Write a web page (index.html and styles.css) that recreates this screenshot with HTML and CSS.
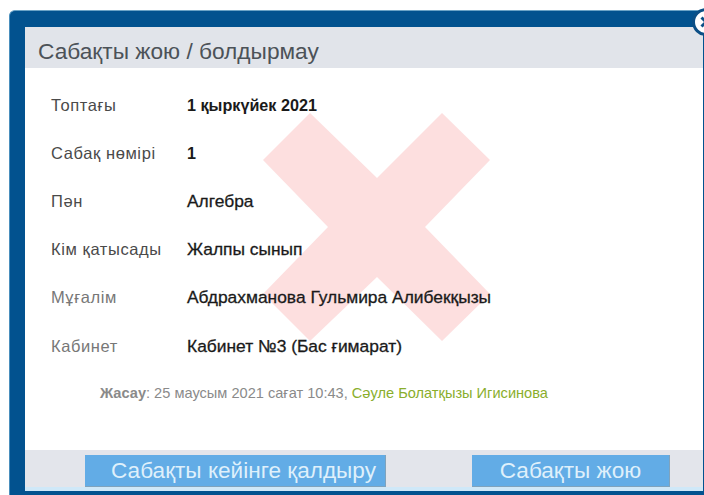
FILE: index.html
```html
<!DOCTYPE html>
<html lang="kk">
<head>
<meta charset="utf-8">
<title>Сабақты жою / болдырмау</title>
<link rel="stylesheet" href="styles.css">
</head>
<body>
<section class="dialog">
  <button class="close" type="button" aria-label="Жабу">
    <svg class="close-icon" viewBox="0 0 30 30" width="30" height="30">
      <circle cx="15" cy="15" r="12.5" fill="#fff" stroke="#0c4f86" stroke-width="3"/>
      <path d="M10.5 10.5l9 9M19.5 10.5l-9 9" stroke="#0c4f86" stroke-width="3"/>
    </svg>
  </button>
  <div class="panel">
    <header class="head">Сабақты жою / болдырмау</header>
    <div class="body">
      <svg class="cross" viewBox="0 0 227 228" width="227" height="228" aria-hidden="true">
        <path d="M47 0L114 65L179 0L227 47L162 114L227 181L179 228L114 164L47 228L0 181L65 114L0 47Z" fill="#fddfdf"/>
      </svg>
      <dl class="info">
        <dt class="label">Топтағы</dt><dd class="value strong">1 қыркүйек 2021</dd>
        <dt class="label">Сабақ нөмірі</dt><dd class="value strong">1</dd>
        <dt class="label">Пән</dt><dd class="value">Алгебра</dd>
        <dt class="label">Кім қатысады</dt><dd class="value">Жалпы сынып</dd>
        <dt class="label faded">Мұғалім</dt><dd class="value">Абдрахманова Гульмира Алибекқызы</dd>
        <dt class="label faded">Кабинет</dt><dd class="value">Кабинет №3 (Бас ғимарат)</dd>
      </dl>
      <p class="meta"><b class="meta-key">Жасау</b>: 25 маусым 2021 сағат 10:43, <span class="author">Сәуле Болатқызы Игисинова</span></p>
    </div>
    <footer class="foot">
      <button class="btn btn-wide" type="button">Сабақты кейінге қалдыру</button>
      <button class="btn btn-narrow" type="button">Сабақты жою</button>
    </footer>
  </div>
</section>
</body>
</html>
```
FILE: styles.css
```css
* { box-sizing: border-box; }

html, body {
  margin: 0;
  height: 100%;
  overflow: hidden;
  background: #fff;
}

body {
  padding: 10px 0 0 9px;
  font-family: "Liberation Sans", Arial, sans-serif;
}

.dialog {
  position: relative;
  height: 485px;
  background: #02528f;
  border-top: 1px solid #6ba3c6;
  border-left: 1px solid #4a8fbd;
  border-radius: 6px 0 0 0;
  padding: 16px 1px 4px 15px;
}

.close {
  position: absolute;
  top: -4px;
  right: -17px;
  width: 30px;
  height: 30px;
  padding: 0;
  border: 0;
  background: none;
  z-index: 2;
}

.close-icon { display: block; }

.panel {
  display: flex;
  flex-direction: column;
  height: 100%;
  background: #fff;
}

.head {
  height: 41px;
  padding: 11px 0 0 13px;
  font-size: 22.7px;
  line-height: 26px;
  color: #4c5258;
  background: #e1e4ea;
}

.body {
  position: relative;
  flex: 1;
  padding-top: 13px;
}

.cross {
  position: absolute;
  left: 238px;
  top: 45px;
}

.info {
  position: relative;
  display: grid;
  grid-template-columns: 136px 1fr;
  grid-auto-rows: 48.2px;
  align-items: center;
  margin: 0 0 0 26px;
}

.label {
  font-size: 16.5px;
  letter-spacing: 0.6px;
  color: #4a4a4a;
}

.label.faded { color: #777; }

.value {
  margin: 0;
  font-size: 17.4px;
  font-weight: 400;
  color: #1a1a1a;
  -webkit-text-stroke: 0.3px #1a1a1a;
}

.value.strong {
  font-size: 16.2px;
  font-weight: 700;
  -webkit-text-stroke: 0;
}

.meta {
  position: relative;
  margin: 16px 0 0 75px;
  font-size: 14.6px;
  line-height: 14px;
  color: #8a8a8a;
}

.meta-key { font-weight: 700; }

.author { color: #8aae2c; }

.foot {
  display: flex;
  height: 41px;
  padding: 5px 0 4px 60px;
  gap: 86px;
  background: linear-gradient(#e3e5eb 37px, #cfe8f8 37px);
}

.btn {
  height: 32px;
  padding: 0;
  border: 0;
  border-right: 1px solid #7fa3bd;
  border-bottom: 1px solid #7fa3bd;
  background: #62ace6;
  color: #dff0fb;
  font: 400 22.6px/30px "Liberation Sans", Arial, sans-serif;
}

.btn-wide {
  width: 301px;
  padding-left: 17px;
}

.btn-narrow { width: 198px; }
```
